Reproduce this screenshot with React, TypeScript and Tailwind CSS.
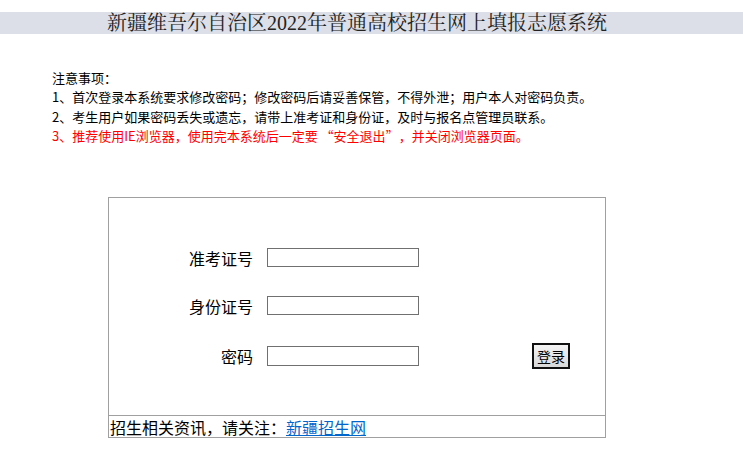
const cjk = "font-['SimSun','Noto_Sans_CJK_SC',sans-serif]";

function Field({ label }: { label: string }) {
  return (
    <div className="flex h-[19px] items-center">
      <span className="w-[158px] pr-[14px] text-right text-[16px] leading-none text-black">{label}</span>
      <input type="text" className="h-[19px] w-[152px] border border-[#707070] bg-white outline-none" />
    </div>
  );
}

export default function App() {
  return (
    <div className={`min-h-[476px] bg-white ${cjk}`}>
      {/* title band */}
      <div className="mt-3 flex h-[22px] items-center justify-center bg-[#dcdfe7] pr-[29px]">
        <h1 className="font-['Liberation_Serif','Noto_Serif_CJK_SC','Noto_Sans_CJK_SC',serif] text-[20px] leading-none text-[#222]">
          新疆维吾尔自治区2022年普通高校招生网上填报志愿系统
        </h1>
      </div>

      {/* notice */}
      <div className="mt-[34px] pl-[52px] text-[13px] leading-[19.3px] text-black">
        <p>注意事项：</p>
        <p>1、首次登录本系统要求修改密码；修改密码后请妥善保管，不得外泄；用户本人对密码负责。</p>
        <p>2、考生用户如果密码丢失或遗忘，请带上准考证和身份证，及时与报名点管理员联系。</p>
        <p className="text-[#ff0000]">
          3、推荐使用IE浏览器，使用完本系统后一定要{" "}
          <span className="inline-block w-[13px] text-right">“</span>安全退出
          <span className="inline-block w-[13px]">”</span>，并关闭浏览器页面。
        </p>
      </div>

      {/* login box */}
      <div className="ml-[108px] mt-[52px] w-[498px] border border-[#a0a0a0]">
        <div className="h-[217px] pt-[50px]">
          <Field label="准考证号" />
          <div className="mt-[29px]">
            <Field label="身份证号" />
          </div>
          <div className="mt-[28px] flex h-[26px] items-center">
            <span className="w-[158px] pr-[14px] text-right text-[16px] leading-none text-black">密码</span>
            <input type="password" className="h-[20px] w-[152px] border border-[#707070] bg-white outline-none" />
            <button className="ml-[113px] h-[26px] w-[38px] border-2 border-[#111] bg-gradient-to-b from-[#f4f4f4] to-[#d8d8d8] text-[14px] leading-none text-black">
              登录
            </button>
          </div>
        </div>
        <div className="flex h-[22px] items-center border-t border-[#a0a0a0] pl-[1px] text-[16px] leading-none text-black">
          招生相关资讯，请关注：
          <a href="#" className="text-[#0066cc] underline">新疆招生网</a>
        </div>
      </div>
    </div>
  );
}
